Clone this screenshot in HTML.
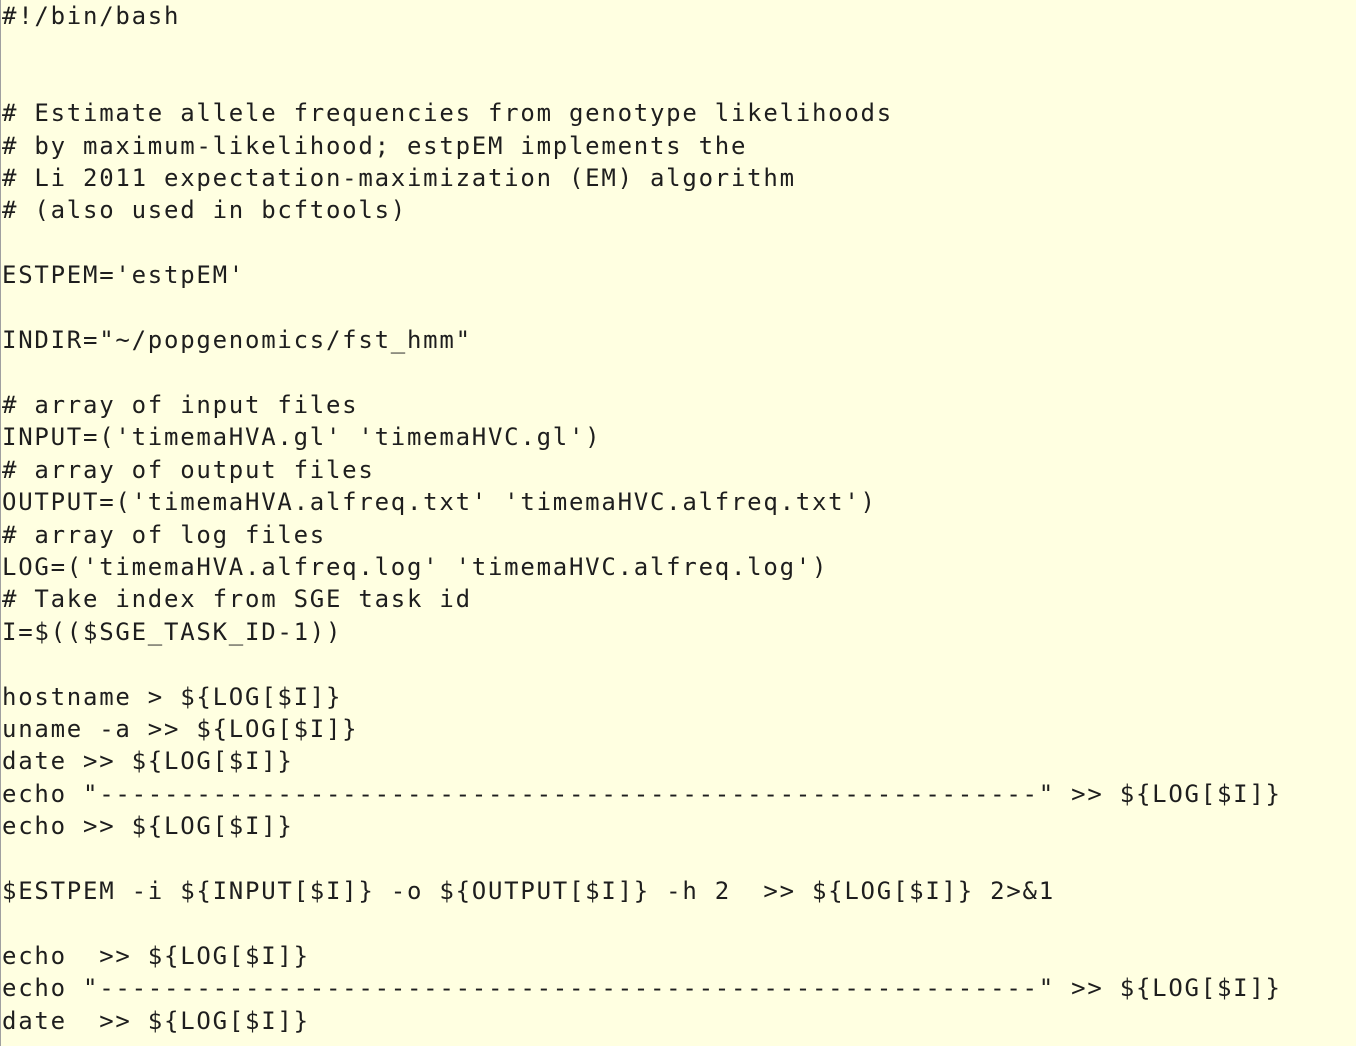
<!DOCTYPE html>
<html><head><meta charset="utf-8"><style>
html,body{margin:0;padding:0;width:1356px;height:1046px;overflow:hidden;background:#ffffe1;}
.b{position:absolute;left:0;top:0;width:1px;height:1046px;background:#a0a0a0;}
pre{margin:0;position:absolute;left:2px;top:0px;font-family:"DejaVu Sans Mono","Liberation Mono",monospace;font-size:24px;letter-spacing:1.75px;line-height:32.4px;color:#1e1e1e;}
</style></head><body><div class="b"></div><pre>#!/bin/bash


# Estimate allele frequencies from genotype likelihoods
# by maximum-likelihood; estpEM implements the
# Li 2011 expectation-maximization (EM) algorithm
# (also used in bcftools)

ESTPEM='estpEM'

INDIR="~/popgenomics/fst_hmm"

# array of input files
INPUT=('timemaHVA.gl' 'timemaHVC.gl')
# array of output files
OUTPUT=('timemaHVA.alfreq.txt' 'timemaHVC.alfreq.txt')
# array of log files
LOG=('timemaHVA.alfreq.log' 'timemaHVC.alfreq.log')
# Take index from SGE task id
I=$(($SGE_TASK_ID-1))

hostname &gt; ${LOG[$I]}
uname -a &gt;&gt; ${LOG[$I]}
date &gt;&gt; ${LOG[$I]}
echo "----------------------------------------------------------" &gt;&gt; ${LOG[$I]}
echo &gt;&gt; ${LOG[$I]}

$ESTPEM -i ${INPUT[$I]} -o ${OUTPUT[$I]} -h 2  &gt;&gt; ${LOG[$I]} 2&gt;&amp;1

echo  &gt;&gt; ${LOG[$I]}
echo "----------------------------------------------------------" &gt;&gt; ${LOG[$I]}
date  &gt;&gt; ${LOG[$I]}</pre></body></html>
